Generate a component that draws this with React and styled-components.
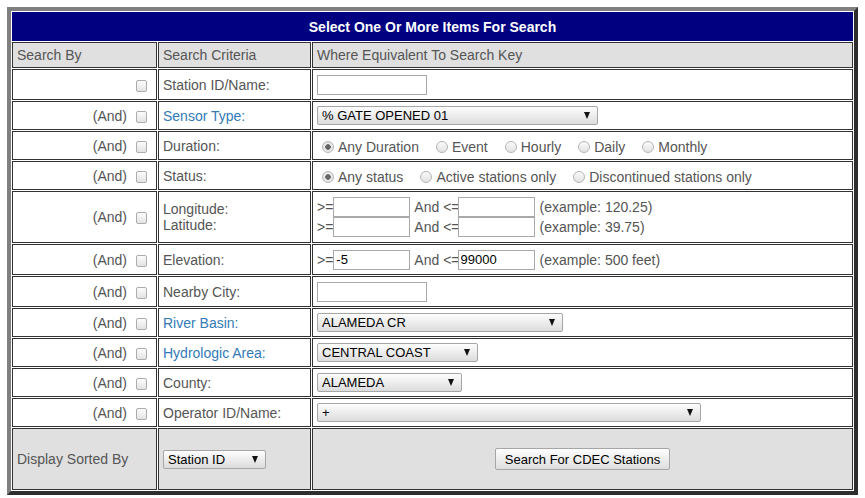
import styled, { createGlobalStyle } from "styled-components";

const GlobalStyle = createGlobalStyle`
  body {
    margin: 0;
    background: #fff;
    font-family: "Liberation Sans", Arial, sans-serif;
    font-size: 14px;
    color: #555;
  }
`;

const Page = styled.div`
  padding: 7px;
`;

const SearchTable = styled.table`
  width: 851px;
  border-collapse: separate;
  border-spacing: 1px;
  border-style: solid;
  border-width: 4px;
  border-color: #808080 #2e2e2e #2e2e2e #808080;
  table-layout: fixed;
`;

const Cell = styled.td`
  box-sizing: border-box;
  border: 1px solid #333;
  padding: 0 4px;
  height: ${(p) => p.$h || 29}px;
  vertical-align: middle;
  text-align: ${(p) => p.$align || "left"};
  background: ${(p) => (p.$shade ? "#e0e0e0" : "#fff")};
  color: ${(p) => (p.$link ? "#337ab7" : "#555")};
  line-height: 16px;
  white-space: nowrap;
`;

const TitleCell = styled.td`
  box-sizing: border-box;
  height: 29px;
  background: #000080;
  border: 1px solid #000080;
  color: #fff;
  font-weight: bold;
  text-align: center;
`;

const Check = styled.input.attrs({ type: "checkbox" })`
  appearance: none;
  width: 11px;
  height: 12px;
  margin: 0 5px 0 9px;
  vertical-align: -2px;
  border: 1px solid #adadad;
  border-radius: 2px;
  background: linear-gradient(#fcfcfc, #e3e3e3);
`;

const Radio = styled.input.attrs({ type: "radio" })`
  appearance: none;
  width: 12px;
  height: 12px;
  margin: 0 4px 0 0;
  vertical-align: -1px;
  border: 1px solid #b5b5b5;
  border-radius: 50%;
  background: ${(p) =>
    p.checked
      ? "radial-gradient(circle, #666 0 2.5px, #e8e8e8 3px)"
      : "linear-gradient(#fafafa, #e2e2e2)"};
`;

const Options = styled.div`
  display: flex;
  align-items: center;
  gap: 17px;
  padding-top: 3px;
  padding-left: 5px;
`;

const TextBox = styled.input.attrs({ type: "text" })`
  box-sizing: border-box;
  width: ${(p) => p.$w || 110}px;
  height: 20px;
  margin: 0;
  padding: 1px 2px;
  border: 1px solid #a9a9a9;
  font-family: "Liberation Sans", Arial, sans-serif;
  font-size: 13px;
  color: #000;
  vertical-align: middle;
`;

const Range = styled.div`
  display: flex;
  align-items: center;
  height: 20px;
`;

const Sep = styled.span`
  margin: 0 -2px 0 4px;
`;

const Hint = styled.span`
  margin-left: 5px;
`;

const SelectWrap = styled.span`
  position: relative;
  display: inline-block;
  vertical-align: middle;

  &::after {
    content: "";
    position: absolute;
    right: 8px;
    top: 6px;
    border-left: 3.5px solid transparent;
    border-right: 3.5px solid transparent;
    border-top: 7px solid #111;
    pointer-events: none;
  }
`;

const Select = styled.select`
  appearance: none;
  box-sizing: border-box;
  width: ${(p) => p.$w}px;
  height: 19px;
  margin: 0;
  padding: 0 4px;
  border: 1px solid #a6a6a6;
  border-radius: 2px;
  background: linear-gradient(#fdfdfd, #dcdcdc);
  font-family: "Liberation Sans", Arial, sans-serif;
  font-size: 13px;
  color: #000;
`;

const Button = styled.button`
  height: 22px;
  padding: 0 9px;
  border: 1px solid #a6a6a6;
  border-radius: 2px;
  background: linear-gradient(#fdfdfd, #dedede);
  font-family: "Liberation Sans", Arial, sans-serif;
  font-size: 13px;
  color: #000;
`;

const Dropdown = ({ value, width }) => (
  <SelectWrap>
    <Select $w={width} defaultValue={value}>
      <option>{value}</option>
    </Select>
  </SelectWrap>
);

const RadioGroup = ({ name, items }) => (
  <Options>
    {items.map((it, i) => (
      <label key={it}>
        <Radio name={name} checked={i === 0} readOnly />
        {it}
      </label>
    ))}
  </Options>
);

const RangeRow = ({ lo = "", hi = "", hint }) => (
  <Range>
    &gt;=
    <TextBox $w={77} defaultValue={lo} />
    <Sep>And &lt;=</Sep>
    <TextBox $w={77} defaultValue={hi} />
    <Hint>(example: {hint})</Hint>
  </Range>
);

const rows = [
  { label: "Station ID/Name:", h: 31, first: true, field: <TextBox /> },
  { label: "Sensor Type:", link: true, field: <Dropdown value="% GATE OPENED 01" width={281} /> },
  {
    label: "Duration:",
    field: <RadioGroup name="dur" items={["Any Duration", "Event", "Hourly", "Daily", "Monthly"]} />,
  },
  {
    label: "Status:",
    field: (
      <RadioGroup
        name="status"
        items={["Any status", "Active stations only", "Discontinued stations only"]}
      />
    ),
  },
  {
    label: (
      <>
        Longitude:
        <br />
        Latitude:
      </>
    ),
    h: 52,
    field: (
      <>
        <RangeRow hint="120.25" />
        <RangeRow hint="39.75" />
      </>
    ),
  },
  { label: "Elevation:", h: 31, field: <RangeRow lo="-5" hi="99000" hint="500 feet" /> },
  { label: "Nearby City:", h: 31, field: <TextBox /> },
  { label: "River Basin:", link: true, field: <Dropdown value="ALAMEDA CR" width={246} /> },
  { label: "Hydrologic Area:", link: true, field: <Dropdown value="CENTRAL COAST" width={161} /> },
  { label: "County:", field: <Dropdown value="ALAMEDA" width={145} /> },
  { label: "Operator ID/Name:", field: <Dropdown value="+" width={384} /> },
];

export default function App() {
  return (
    <Page>
      <GlobalStyle />
      <SearchTable>
        <colgroup>
          <col style={{ width: 145 }} />
          <col style={{ width: 153 }} />
          <col />
        </colgroup>
        <tbody>
          <tr>
            <TitleCell colSpan={3}>Select One Or More Items For Search</TitleCell>
          </tr>
          <tr>
            <Cell $shade $h={26}>Search By</Cell>
            <Cell $shade $h={26}>Search Criteria</Cell>
            <Cell $shade $h={26}>Where Equivalent To Search Key</Cell>
          </tr>
          {rows.map((r, i) => (
            <tr key={i}>
              <Cell $align="right" $h={r.h}>
                {r.first ? "" : "(And)"}
                <Check />
              </Cell>
              <Cell $link={r.link} $h={r.h}>{r.label}</Cell>
              <Cell $h={r.h}>{r.field}</Cell>
            </tr>
          ))}
          <tr>
            <Cell $shade $h={62}>Display Sorted By</Cell>
            <Cell $shade $h={62}>
              <Dropdown value="Station ID" width={103} />
            </Cell>
            <Cell $shade $h={62} $align="center">
              <Button>Search For CDEC Stations</Button>
            </Cell>
          </tr>
        </tbody>
      </SearchTable>
    </Page>
  );
}
